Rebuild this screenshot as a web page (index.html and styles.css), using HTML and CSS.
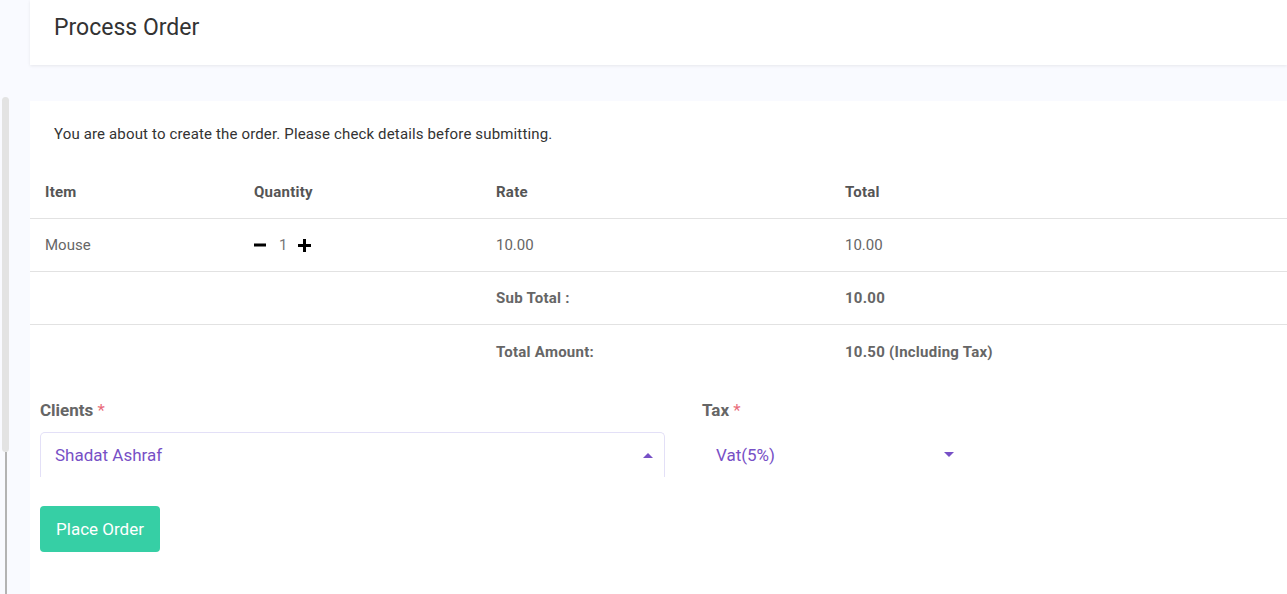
FILE: index.html
```html
<!DOCTYPE html>
<html>
<head>
<meta charset="utf-8">
<link rel="stylesheet" href="styles.css">
</head>
<body>
<div class="page">
  <div class="rail">
    <div class="thumb"></div>
    <div class="track"></div>
  </div>
  <div class="main">
    <div class="header"><h1 class="title">Process Order</h1></div>
    <div class="card">
      <p class="msg">You are about to create the order. Please check details before submitting.</p>
      <div class="table">
        <div class="row head">
          <div class="c c1">Item</div>
          <div class="c c2">Quantity</div>
          <div class="c c3">Rate</div>
          <div class="c c4">Total</div>
        </div>
        <div class="row">
          <div class="c c1">Mouse</div>
          <div class="c c2 qty">
            <svg class="ic" width="12" height="12" viewBox="0 0 12 12"><rect x="0" y="4.5" width="12" height="3" fill="#000"/></svg>
            <span class="num">1</span>
            <svg class="ic" width="13" height="13" viewBox="0 0 13 13"><rect x="0" y="5" width="13" height="3" fill="#000"/><rect x="5" y="0" width="3" height="13" fill="#000"/></svg>
          </div>
          <div class="c c3">10.00</div>
          <div class="c c4">10.00</div>
        </div>
        <div class="row bold">
          <div class="c c1"></div>
          <div class="c c2"></div>
          <div class="c c3">Sub Total :</div>
          <div class="c c4">10.00</div>
        </div>
        <div class="row bold last">
          <div class="c c1"></div>
          <div class="c c2"></div>
          <div class="c c3">Total Amount:</div>
          <div class="c c4">10.50 (Including Tax)</div>
        </div>
      </div>
      <div class="form">
        <div class="field f-client">
          <label class="lbl">Clients <span class="req">*</span></label>
          <div class="select boxed">
            <span class="val">Shadat Ashraf</span>
            <span class="arrow up"></span>
          </div>
        </div>
        <div class="field f-tax">
          <label class="lbl">Tax <span class="req">*</span></label>
          <div class="select">
            <span class="val">Vat(5%)</span>
            <span class="arrow down"></span>
          </div>
        </div>
      </div>
      <button class="btn">Place Order</button>
    </div>
  </div>
</div>
</body>
</html>
```
FILE: styles.css
```css
* { box-sizing: border-box; }
html, body { margin: 0; padding: 0; height: 100%; }
body {
  background: #f9faff;
  font-family: Roboto, "Liberation Sans", sans-serif;
  overflow: hidden;
}
.page { display: flex; height: 594px; }
.rail {
  width: 30px;
  flex: none;
  padding-top: 97px;
  display: flex;
  flex-direction: column;
}
.thumb {
  margin-left: 2px;
  width: 7px;
  height: 355px;
  background: #e3e3e3;
  border-radius: 4px;
}
.track {
  margin-left: 5px;
  width: 2px;
  flex: 1;
  background: #b3b3b3;
}
.main { flex: 1; display: flex; flex-direction: column; gap: 36px; }
.header {
  height: 65px;
  background: #fff;
  box-shadow: 0 1px 3px rgba(0,0,0,0.08);
  padding: 14px 24px 0;
  display: flex;
  align-items: flex-start;
}
.title {
  margin: 0;
  font-size: 23px;
  line-height: 27px;
  font-weight: 400;
  color: #333;
}
.card { flex: 1; background: #fff; padding-top: 22px; }
.msg {
  margin: 0 0 21px 24px;
  font-size: 15px;
  line-height: 22px;
  color: #333;
  letter-spacing: 0.15px;
}
.table { display: flex; flex-direction: column; }
.row {
  display: flex;
  height: 53px;
  align-items: center;
  border-bottom: 1px solid #e2e2e2;
  font-size: 15px;
  color: #666;
}
.row.last { border-bottom: none; }
.row.head { font-weight: 700; color: #555; letter-spacing: 0.25px; }
.row.bold { font-weight: 700; letter-spacing: 0.25px; }
.c { padding-left: 15px; }
.c1 { width: 209px; }
.c2 { width: 242px; }
.c3 { width: 349px; }
.c4 { flex: 1; }
.qty { display: flex; align-items: center; }
.ic { display: block; }
.num { margin: 0 11px 0 13px; color: #777; }
.form {
  display: flex;
  gap: 36px;
  padding: 22px 0 0 10px;
}
.field { display: flex; flex-direction: column; gap: 11px; }
.f-client { width: 625px; }
.f-tax { width: 265px; }
.lbl { font-size: 17px; font-weight: 700; color: #666; line-height: 21px; }
.f-tax .lbl { padding-left: 1px; }
.req { color: #e96d7b; font-weight: 400; }
.select {
  height: 45px;
  border: 1px solid transparent;
  border-bottom: none;
  border-radius: 5px 5px 0 0;
  display: flex;
  align-items: center;
  justify-content: space-between;
  padding: 0 11px 0 14px;
  color: #7750c6;
  font-size: 17px;
}
.select.boxed { border-color: #e3e0f7; }
.arrow {
  width: 0; height: 0;
  border-left: 5.5px solid transparent;
  border-right: 5.5px solid transparent;
}
.arrow.up { border-bottom: 5px solid #7750c6; }
.arrow.down { border-top: 5px solid #7750c6; margin-bottom: 2px; }
.btn {
  margin: 29px 0 0 10px;
  width: 120px;
  height: 46px;
  border: none;
  border-radius: 4px;
  background: #36cfa5;
  color: #fff;
  font-family: Roboto, "Liberation Sans", sans-serif;
  font-size: 17px;
}
```
